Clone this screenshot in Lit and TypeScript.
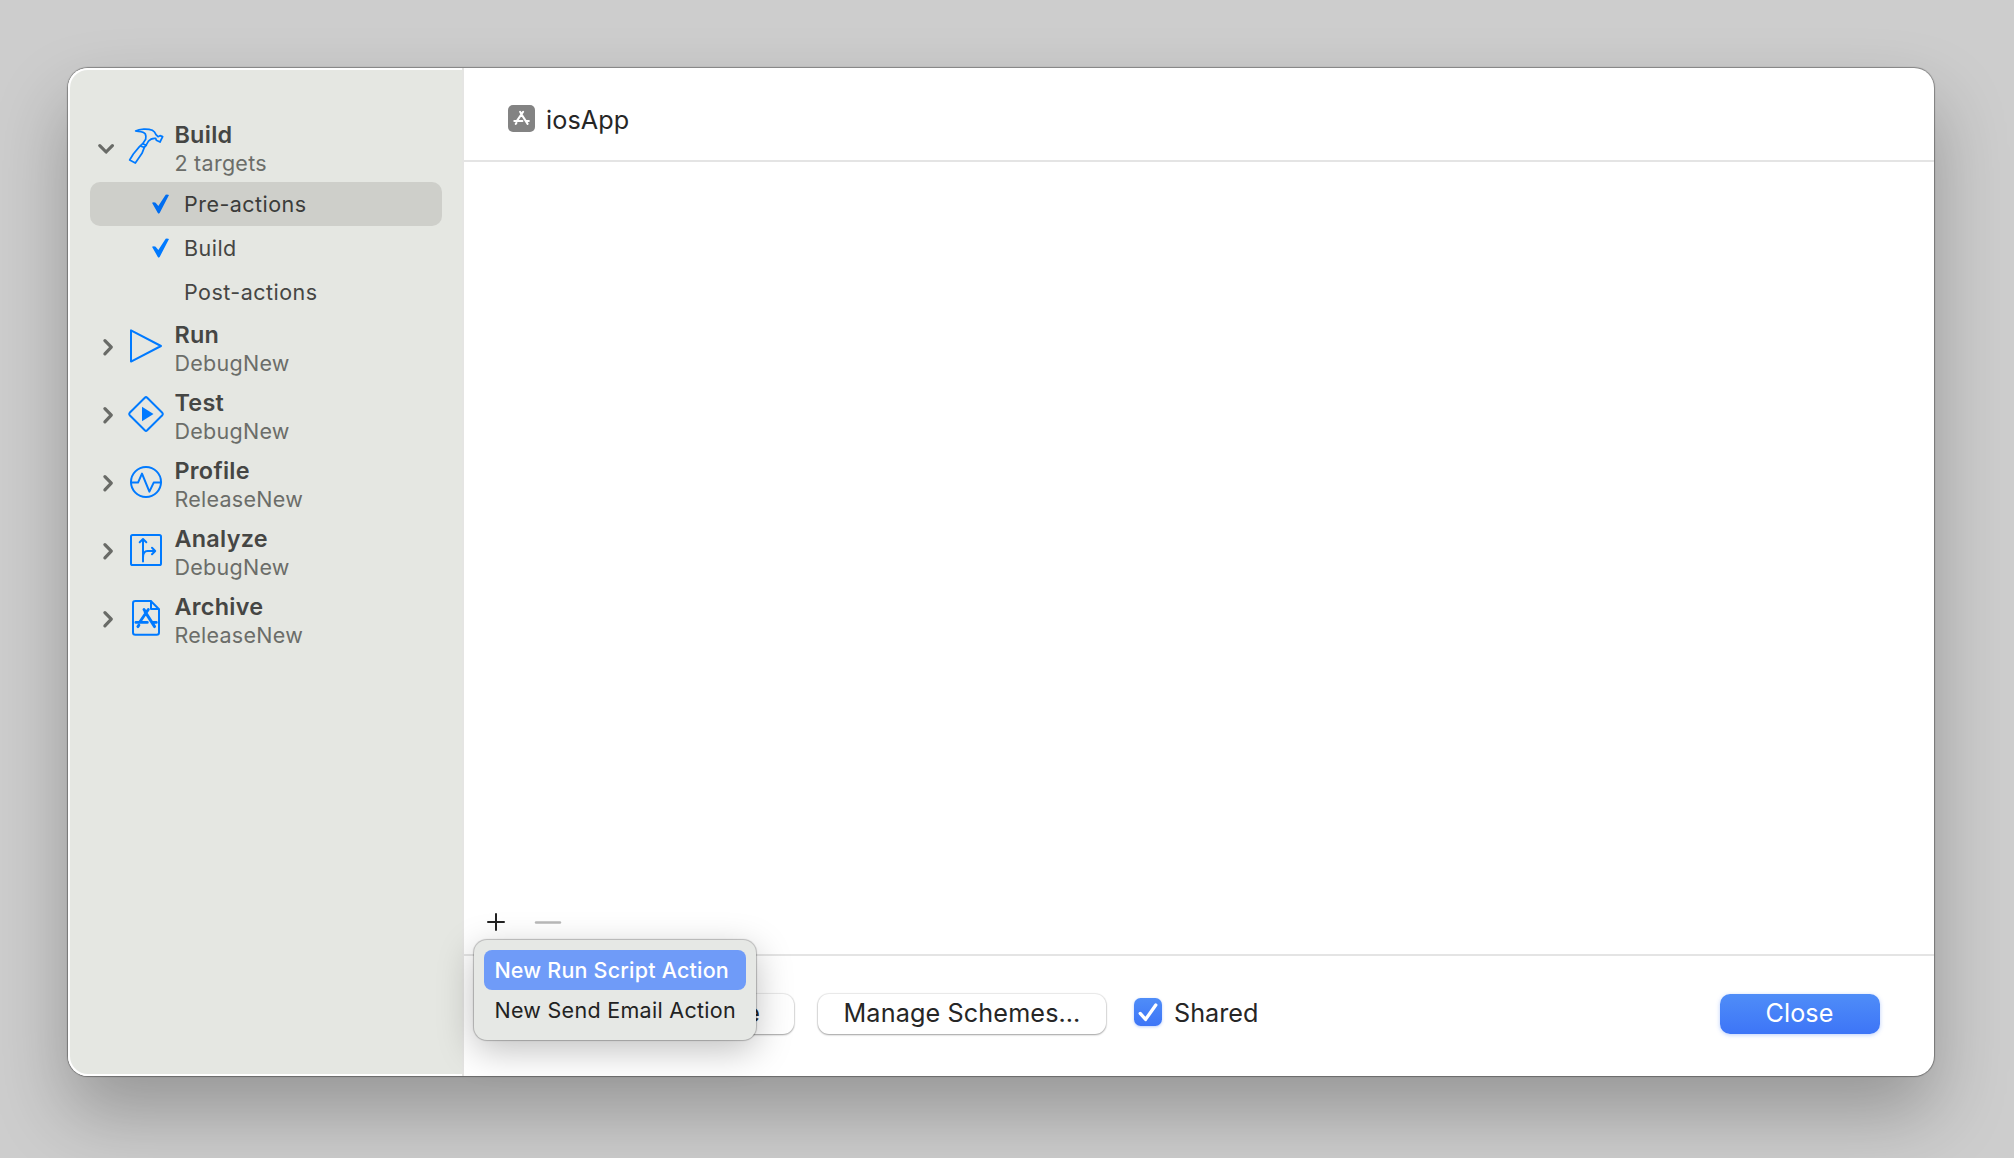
import { LitElement, html, css, svg } from "lit";
import { customElement, property } from "lit/decorators.js";
import { classMap } from "lit/directives/class-map.js";

const storeGlyph = svg`
  <path d="M16 9.5L18 12.4M20.3 9.5L11.8 22M17 11.6L26.6 26.6M7.9 22.4H19.3M24.6 22.4H28.3M10.9 25.2L9.9 26.6"></path>`;

const icons: Record<string, unknown> = {
  hammer: svg`<svg viewBox="24 24 108 108"><g stroke-width="5.2">
    <path d="M47 33C58 26 84 25 97 31C104 35 106 39 108 44L114 50L120 47L128 50L120 66L109 61L107 55C98 54 89 59 85 64L78 76L73 82L66 100L46 129L29 120L40 102L59 79L68 71L77 58C78 52 78 46 76 42C71 34 60 35 47 33ZM61 78L73 82M68 71L79 76"></path></g>
  </svg>`,
  run: svg`<svg viewBox="0 0 36 36"><path d="M3 2.4V33.6L33 18Z"></path></svg>`,
  test: svg`<svg viewBox="0 0 36 36">
    <path d="M16.8 1.7Q18 .6 19.2 1.7L34.3 16.8Q35.4 18 34.3 19.2L19.2 34.3Q18 35.4 16.8 34.3L1.7 19.2Q.6 18 1.7 16.8Z"></path>
    <path class="solid" d="M14 10.7L25.5 18L14 25.3Z"></path>
  </svg>`,
  profile: svg`<svg viewBox="0 0 36 36">
    <circle cx="18" cy="18" r="15"></circle>
    <path d="M3 18.6H10L14 9.6L21.4 27.6L25.7 18.6H33"></path>
  </svg>`,
  analyze: svg`<svg viewBox="0 0 36 36">
    <rect x="3" y="3" width="30" height="30" rx="1.6"></rect>
    <path d="M15 29.5V7.2M11.7 10.2L15 7L18.3 10.2M15 25.5C15 21 16 19 19.5 19H27M24 15.8L27.2 19L24 22.2"></path>
  </svg>`,
  archive: svg`<svg viewBox="0 0 36 36">
    <path d="M7 1H22.8L31 9.2V32.5Q31 34.8 28.7 34.8H7.3Q5 34.8 5 32.5V3.2Q5 1 7.3 1M23 1V9H31"></path>
    <g stroke-width="2.9">${storeGlyph}</g>
  </svg>`,
};

interface Phase {
  title: string;
  detail: string;
  icon: string;
  actions?: { label: string; checked: boolean; selected?: boolean }[];
}

const phases: Phase[] = [
  {
    title: "Build",
    detail: "2 targets",
    icon: "hammer",
    actions: [
      { label: "Pre-actions", checked: true, selected: true },
      { label: "Build", checked: true },
      { label: "Post-actions", checked: false },
    ],
  },
  { title: "Run", detail: "DebugNew", icon: "run" },
  { title: "Test", detail: "DebugNew", icon: "test" },
  { title: "Profile", detail: "ReleaseNew", icon: "profile" },
  { title: "Analyze", detail: "DebugNew", icon: "analyze" },
  { title: "Archive", detail: "ReleaseNew", icon: "archive" },
];

@customElement("scheme-phase")
class SchemePhase extends LitElement {
  @property({ attribute: false }) phase!: Phase;

  static styles = css`
    :host { display: block; }
    .head { display: flex; height: 68px; }
    .chevron { width: 38px; padding: 22px 0 0 8px; box-sizing: border-box; }
    .chevron svg { display: block; width: 20px; height: 22px; fill: none; stroke: #696b67; stroke-width: 3.2; stroke-linecap: round; stroke-linejoin: round; }
    .icon { padding-top: 14px; width: 46.4px; }
    .icon svg { display: block; width: 36px; height: 36px; overflow: visible; fill: none; stroke: #007aff; stroke-width: 2; stroke-linecap: round; stroke-linejoin: round; }
    .icon .solid { fill: #007aff; stroke: none; }
    .text { padding-top: 7px; line-height: 28px; white-space: nowrap; }
    .title { font-size: 23.4px; font-weight: 600; letter-spacing: 0.3px; color: #454644; }
    .detail { font-size: 21.5px; letter-spacing: 0.28px; color: #6b6d69; }
    .action { display: flex; height: 44px; border-radius: 10px; align-items: center; padding-left: 62px; box-sizing: border-box; font-size: 21.5px; letter-spacing: 0.47px; color: #454644; }
    .selected { background: #cecfca; color: #3b3c3a; }
    .mark { width: 32px; height: 20px; }
    .mark svg { display: block; width: 17px; height: 20px; fill: #007aff; }
    .selected .mark svg { fill: #006df0; }
  `;

  render() {
    const { title, detail, icon, actions } = this.phase;
    return html`
      <div class="head">
        <div class="chevron">
          <svg viewBox="0 0 20 22">
            <path d=${actions ? "M1.8 9.6L8.1 16L14.4 9.6" : "M6.9 4.6L13.3 11.2L6.9 17.8"}></path>
          </svg>
        </div>
        <div class="icon">${icons[icon]}</div>
        <div class="text">
          <div class="title">${title}</div>
          <div class="detail">${detail}</div>
        </div>
      </div>
      ${actions?.map(
        (a) => html`<div class=${classMap({ action: true, selected: !!a.selected })}>
          <div class="mark">
            ${a.checked
              ? html`<svg viewBox="306 432 51 60"><path d="M306 458Q312 456 317 458L325 468L347 434Q352 432 357 435L329 489L326 491L323 488Z"></path></svg>`
              : null}
          </div>
          ${a.label}
        </div>`,
      )}
    `;
  }
}

@customElement("app-root")
class AppRoot extends LitElement {
  static styles = css`
    :host { display: block; height: 100vh; box-sizing: border-box; overflow: hidden; padding: 68px 80px 82px 68px; background: #cdcdcd; font-family: Inter, "Liberation Sans", sans-serif; color: #262626; }
    .window { display: grid; grid-template-columns: 396px 1fr; height: 1008px; border-radius: 20px; background: #fff; box-shadow: 0 0 1px 1px rgba(0, 0, 0, 0.34), 0 36px 72px rgba(0, 0, 0, 0.27); }
    .sidebar { border-right: 2px solid #e5e5e3; }
    .list { height: 1008px; box-sizing: border-box; border: 2px solid #fff; border-right: 0; border-radius: 20px 0 0 20px; background: #e5e7e2; padding: 44px 20px 0; }
    .main { position: relative; display: flex; flex-direction: column; min-width: 0; }
    .header { display: flex; align-items: center; gap: 11px; height: 94px; padding: 12px 0 0 44px; box-sizing: border-box; border-bottom: 2px solid #e4e4e4; font-size: 25.2px; letter-spacing: 0.1px; }
    .app-icon { width: 27px; height: 27px; margin-bottom: 3px; border-radius: 5px; background: #838383; }
    .app-icon svg { display: block; width: 27px; height: 27px; fill: none; stroke: #fff; stroke-width: 2.9; stroke-linecap: round; stroke-linejoin: round; }
    .content { flex: 1; display: flex; align-items: flex-end; }
    .tools { display: flex; align-items: center; gap: 28px; height: 20px; padding: 0 0 22px 22px; }
    .tools svg { display: block; fill: none; stroke-linecap: round; }
    .footer { display: flex; align-items: center; height: 122px; box-sizing: border-box; border-top: 2px solid #e4e4e4; padding: 0 54px 4px 42px; font-size: 25.2px; letter-spacing: 0.13px; }
    .button { display: flex; align-items: center; justify-content: center; box-sizing: border-box; width: 288px; height: 40px; padding-bottom: 3px; margin-right: 24px; border-radius: 11px; background: #fff; white-space: nowrap; box-shadow: 0 0 1px 1px rgba(0, 0, 0, 0.08), 0 1px 2px rgba(0, 0, 0, 0.32); }
    .covered { justify-content: flex-end; padding-right: 34px; }
    .check { display: flex; align-items: center; gap: 12px; margin: 0 auto 4px 4px; letter-spacing: 0; }
    .check span { padding-top: 2px; }
    .box { width: 28px; height: 28px; border-radius: 6.5px; background: linear-gradient(#4f8df8, #3d75f7); box-shadow: 0 1px 3px rgba(61, 117, 247, 0.35); }
    .box svg { display: block; width: 28px; height: 28px; fill: none; stroke: #fff; stroke-width: 3.3; stroke-linecap: round; stroke-linejoin: round; }
    .close { width: 160px; margin: 0; padding-right: 1px; border-radius: 10px; color: #fff; background: linear-gradient(#4f8df8, #3d75f7); box-shadow: 0 1px 4px rgba(61, 117, 247, 0.35); }
    .menu { position: absolute; left: 10px; top: 872px; width: 282px; height: 100px; box-sizing: border-box; padding: 10px; border-radius: 13px; background: #e6e8e5; font-size: 21.5px; letter-spacing: 0.29px; color: #222; white-space: nowrap; box-shadow: 0 0 1px 1px rgba(0, 0, 0, 0.24), 0 10px 36px rgba(0, 0, 0, 0.25); }
    .item { height: 40px; line-height: 40px; padding-left: 10.4px; border-radius: 8px; }
    .active { background: #6f9bf8; color: #fff; font-weight: 500; letter-spacing: 0.2px; }
  `;

  render() {
    return html`
      <div class="window">
        <div class="sidebar">
          <div class="list">${phases.map((p) => html`<scheme-phase .phase=${p}></scheme-phase>`)}</div>
        </div>
        <div class="main">
          <div class="header">
            <div class="app-icon">
              <svg viewBox="-1 0 38 38">${storeGlyph}</svg>
            </div>
            <span>iosApp</span>
          </div>
          <div class="content">
            <div class="tools">
              <svg width="20" height="20" viewBox="0 0 20 20" stroke="#222" stroke-width="2"><path d="M2 10H18M10 2V18"></path></svg>
              <svg width="28" height="20" viewBox="0 0 28 20" stroke="#b9b9b9" stroke-width="2.4"><path d="M2 10.5H26"></path></svg>
            </div>
          </div>
          <div class="footer">
            <div class="button covered">e</div>
            <div class="button">Manage Schemes…</div>
            <div class="check">
              <div class="box"><svg viewBox="0 0 28 28"><path d="M6.2 15.4L11.6 21.4L21.8 7"></path></svg></div>
              <span>Shared</span>
            </div>
            <div class="button close">Close</div>
          </div>
          <div class="menu">
            <div class="item active">New Run Script Action</div>
            <div class="item">New Send Email Action</div>
          </div>
        </div>
      </div>
    `;
  }
}
